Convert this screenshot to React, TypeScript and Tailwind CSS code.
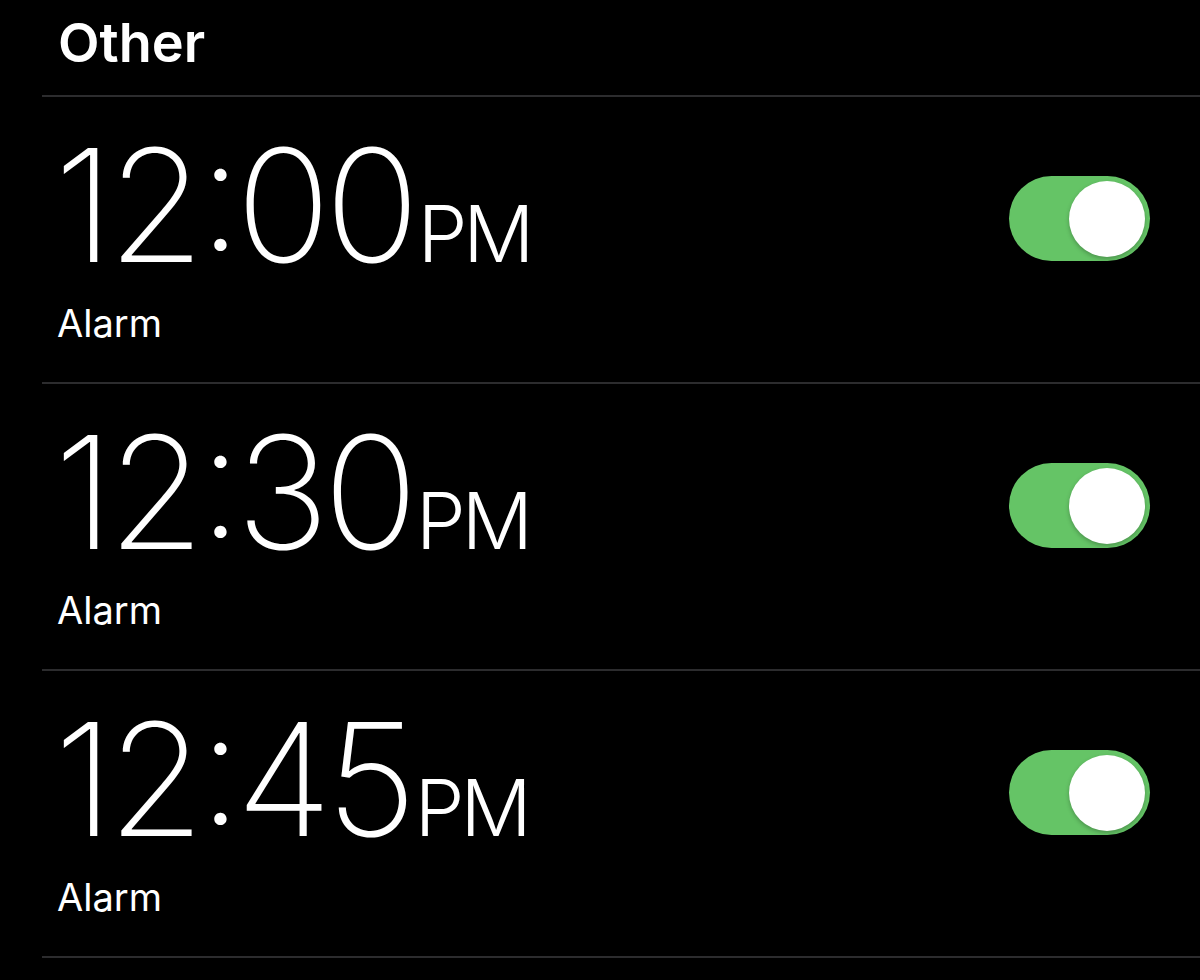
const alarms = [
  { time: ['12', '00'], period: 'PM', label: 'Alarm' },
  { time: ['12', '30'], period: 'PM', label: 'Alarm' },
  { time: ['12', '45'], period: 'PM', label: 'Alarm' },
];

function Toggle() {
  return (
    <div className="mt-[79px] flex h-[85px] w-[141px] items-center justify-end rounded-full bg-[#65c466] pr-[5px]">
      <div className="h-[76px] w-[76px] rounded-full bg-white shadow-[0_2px_4px_rgba(0,0,0,0.25)]" />
    </div>
  );
}

function AlarmRow({ time, period, label }: { time: string[]; period: string; label: string }) {
  return (
    <div className="flex h-[287px] items-start justify-between border-b-2 border-[#2c2c2e] pr-[50px]">
      <div className="flex flex-col pl-[12px] pt-[30px]">
        <div className="flex items-baseline leading-none">
          <span className="text-[157px] font-extralight tracking-[-6px]">
            {time[0]}
            <span className="relative -top-[12px]">:</span>
            {time[1]}
          </span>
          <span className="ml-[4px] text-[79px] font-light tracking-[-4px]">{period}</span>
        </div>
        <span className="mt-[20px] pl-[3px] text-[38px] leading-none">{label}</span>
      </div>
      <Toggle />
    </div>
  );
}

export default function App() {
  return (
    <div
      className="h-[980px] w-[1200px] overflow-hidden bg-black text-white"
      style={{ fontFamily: 'Inter, "Noto Sans", sans-serif' }}
    >
      <div className="pl-[42px]">
        <div className="flex h-[97px] items-center border-b-2 border-[#2c2c2e] pl-[16px] pb-[10px]">
          <span className="text-[54px] font-semibold leading-none">Other</span>
        </div>
        {alarms.map((a) => (
          <AlarmRow key={a.time.join(':')} {...a} />
        ))}
      </div>
    </div>
  );
}
